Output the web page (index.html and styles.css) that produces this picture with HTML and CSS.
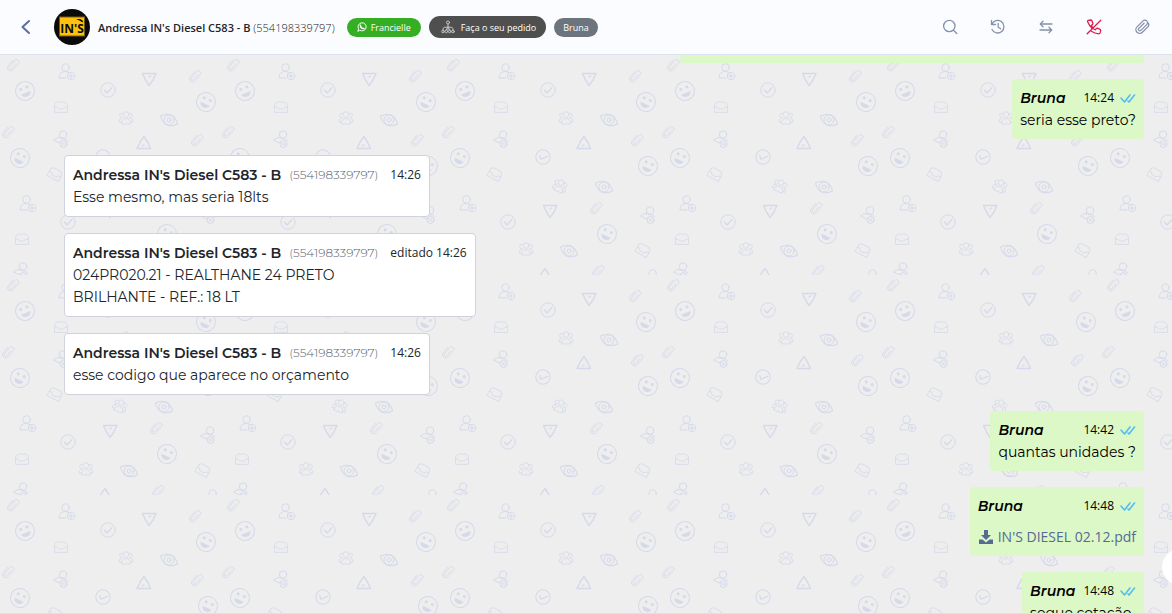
FILE: index.html
```html
<!DOCTYPE html>
<html lang="pt-BR">
  <head>
    <meta charset="UTF-8" />
    <meta name="viewport" content="width=device-width, initial-scale=1.0" />
    <title>Atendimento</title>
    <link rel="stylesheet" href="styles.css" />
  </head>
  <body>
    <header class="chat-header">
      <button class="back-btn" aria-label="Voltar">
        <svg width="16" height="16" viewBox="0 0 16 16"><path d="M11 2 4.500 8 11 14" /></svg>
      </button>
      <svg class="avatar" width="36" height="36" viewBox="0 0 36 36" role="img" aria-label="IN'S">
        <circle cx="18" cy="18" r="18" fill="#0a0a0a" />
        <rect x="5" y="7.500" width="26" height="20" fill="#7a5a10" />
        <rect x="6" y="8.500" width="24" height="18" fill="#fbc10c" />
        <text x="18" y="24" text-anchor="middle">IN'S</text>
        <path d="M22 10.500q6-2 7.500 3l-2.500-1q-1.500-1.500-5-2" fill="#0a0a0a" />
      </svg>
      <h1 class="contact">Andressa IN's Diesel C583 - B <span class="contact-phone">(554198339797)</span></h1>
      <div class="tags">
        <span class="tag tag-green">
          <svg width="10" height="10" viewBox="0 0 16 16">
            <path d="M1.500 14.500 2.500 11A6.500 6.500 0 1 1 5 13.500z" />
            <path d="M5.500 5q0 5 5.500 5.500" stroke-width="2.400" />
          </svg>
          Francielle
        </span>
        <span class="tag tag-dark">
          <svg width="14" height="14" viewBox="0 0 14 14">
            <circle cx="7" cy="2.500" r="1.500" />
            <path d="M7 4v6M2 10V8.500Q2 7 7 7t5 1.500V10M5 10l2-3 2 3" />
            <circle cx="2" cy="11.500" r="1.300" />
            <circle cx="5.300" cy="11.500" r="1.300" />
            <circle cx="8.700" cy="11.500" r="1.300" />
            <circle cx="12" cy="11.500" r="1.300" />
          </svg>
          Faça o seu pedido
        </span>
        <span class="tag tag-gray">Bruna</span>
      </div>
      <nav class="actions">
        <button aria-label="Buscar">
          <svg width="16" height="16" viewBox="0 0 16 16"><circle cx="7.300" cy="7" r="5.700" /><path d="m11.500 11.200 3.300 3.300" /></svg>
        </button>
        <button aria-label="Histórico">
          <svg width="16" height="16" viewBox="0 0 16 16"><path d="M1.500 1.500V5.500h4M1.800 5.300A6.300 6.300 0 1 1 2 10.500M8.200 4.500V8.300l2.500 1.500" /></svg>
        </button>
        <button aria-label="Transferir">
          <svg width="16" height="16" viewBox="0 0 16 16"><path d="M14 5H2.500M5 2.300 2.300 5 5 7.700M2 11h11.500M11 8.300 13.700 11 11 13.700" /></svg>
        </button>
        <button class="end-btn" aria-label="Encerrar">
          <svg width="16" height="16" viewBox="0 0 16 16">
            <path d="M14.800 1.200 1.200 14.800" />
            <path d="M6.300 9.500Q3 6.300 1.500 2.500 1.300 1.500 2.200 1.300L4.800 1q.8 0 1.100.7l1 2.600q.1.700-.4 1.100L5.300 6.500q.7 1.500 2 2.500" />
            <path d="M5.300 12.300q3.500 2.300 7.500 2.500 1 0 1.300-.9l.6-2.500q0-.8-.7-1.100l-2.600-1.100q-.6-.2-1.100.4l-1 1.200-1.500-.8" />
          </svg>
        </button>
        <button aria-label="Anexos">
          <svg width="16" height="16" viewBox="0 0 16 16"><path d="M14.300 7.400 8.400 13.300a3.800 3.800 0 0 1-5.400-5.400L9 1.900a2.600 2.600 0 0 1 3.700 3.700L6.900 11.400a1.400 1.400 0 0 1-2-2L10 4.300M14.300 7.400q1.300-2.200-.7-3.900" /></svg>
        </button>
      </nav>
    </header>

    <main class="chat">
      <svg class="wallpaper" aria-hidden="true">
        <defs>
          <g id="clip"><path transform="rotate(40)" stroke-width=".8" d="M-3.200-1V3.500a3.200 3.200 0 0 0 6.400 0V-4.500a2.400 2.400 0 0 0-4.800 0V3.500a1.500 1.500 0 0 0 3 0V-3M-3.200-1v-2.500" /></g>
          <g id="smile">
            <circle r="9.500" />
            <g class="fill"><circle cx="-3.300" cy="-3" r="1.500" /><circle cx="3.300" cy="-3" r="1.500" /><path d="M-5 2H5Q4 6 0 6t-5-4" /></g>
          </g>
          <g id="plus-user"><circle cx="-1.500" cy="-4.500" r="3.700" /><path d="M-1 6h-7Q-8-.5-1.500-.5L2 .5" /><circle cx="4" cy="4" r="3.700" /><path d="M4 2v4M2 4h4" /></g>
          <g id="x-user"><circle cx="2" cy="-4.500" r="3.700" /><path d="M-1 4Q-4 3-7.500 1-3-3 1-.5q4 0 6 2.500" /><circle cx="2.500" cy="5" r="3.500" /><path d="m1 3.500 3 3m0-3-3 3" /></g>
          <g id="check"><circle r="7.200" /><path d="m-3.500 0 2.500 3 5-5.500" stroke-width="1.200" /></g>
          <g id="arrow"><path d="M-6.500-5.500H7Q4 2 0 6.500-4 1-6.500-5.500zM0-2 1.500-3" stroke-width="1.400" /></g>
          <g id="inbox" opacity=".8"><path d="M-6.500 5V0q0-5 4-5h5q4 0 4 5v5zM-6.500 0h2.500l1.500 2h5L4 0h2.500" /></g>
          <g id="group" stroke-width=".8"><circle cy="-3.500" r="2.800" /><path d="M-4.500 5.500V4Q-4 .5 0 .5T4.500 4v1.500zM-3-4.500a2.200 2.200 0 1 0-.5 4Q-7 0-7 4h2.500M3-4.500a2.200 2.200 0 1 1 .5 4Q7 0 7 4H4.500" /></g>
          <g id="eye"><path transform="rotate(25)" d="M-9.500 0Q-5-5.500 0-5.500T9.500 0Q5 5.500 0 5.500T-9.500 0z" /><circle r="5" /><circle r="2" /></g>
          <pattern id="tile" width="220" height="220" patternUnits="userSpaceOnUse">
            <g class="doodles">
              <use href="#clip" x="13" y="10" />
              <use href="#clip" x="195" y="21" />
              <use href="#clip" x="8" y="77" />
              <use href="#clip" x="197" y="85" />
              <use href="#clip" x="156" y="153" />
              <use href="#clip" x="158" y="216" />
              <use href="#smile" transform="translate(25 36) rotate(-22)" />
              <use href="#smile" transform="translate(206 47) rotate(25)" />
              <use href="#smile" transform="translate(20 103) rotate(25)" />
              <use href="#smile" transform="translate(208 111) rotate(25)" />
              <use href="#smile" transform="translate(167 179) rotate(25)" />
              <use href="#plus-user" x="67" y="17" />
              <use href="#plus-user" x="28" y="149" />
              <use href="#plus-user" x="214" y="223" />
              <use href="#x-user" x="61" y="84" />
              <use href="#x-user" x="208" y="160" />
              <use href="#x-user" x="21" y="216" />
              <use href="#check" x="108" y="35" />
              <use href="#check" transform="translate(103 102) rotate(25)" />
              <use href="#check" x="68" y="167" />
              <use href="#arrow" x="149" y="24" />
              <use href="#arrow" transform="translate(144 88) rotate(180)" />
              <use href="#arrow" x="110" y="156" />
              <use href="#arrow" transform="translate(105 220) rotate(180)" />
              <use href="#inbox" x="61" y="52" />
              <use href="#inbox" transform="translate(55 119) rotate(28)" />
              <use href="#inbox" x="22" y="184" />
              <use href="#inbox" transform="translate(203 195) rotate(28)" />
              <use href="#group" x="126" y="63" />
              <use href="#group" transform="translate(120 131) rotate(22)" />
              <use href="#group" x="86" y="194" />
              <use href="#eye" x="169" y="65" />
              <use href="#eye" x="164" y="132" />
              <use href="#eye" x="129" y="196" />
            </g>
          </pattern>
          <g id="read"><path d="m1 6 3.500 4L10 3M8 9l1 1 5.500-7" /></g>
        </defs>
        <rect width="100%" height="100%" fill="url(#tile)" stroke="none" />
      </svg>

      <div class="messages">
        <div class="msg msg-out msg-cut"></div>

        <article class="msg msg-out">
          <div class="msg-head">
            <em class="sender">Bruna</em>
            <time class="time">14:24</time>
            <svg class="read" width="16" height="12" viewBox="0 0 16 12"><use href="#read" /></svg>
          </div>
          <p>seria esse preto?</p>
        </article>

        <article class="msg msg-in">
          <div class="msg-head">
            <b class="sender">Andressa IN's Diesel C583 - B</b>
            <span class="phone">(554198339797)</span>
            <time class="time">14:26</time>
          </div>
          <p>Esse mesmo, mas seria 18lts</p>
        </article>

        <article class="msg msg-in">
          <div class="msg-head">
            <b class="sender">Andressa IN's Diesel C583 - B</b>
            <span class="phone">(554198339797)</span>
            <span class="time">editado <time>14:26</time></span>
          </div>
          <p>024PR020.21 - REALTHANE 24 PRETO<br />BRILHANTE - REF.: 18 LT</p>
        </article>

        <article class="msg msg-in">
          <div class="msg-head">
            <b class="sender">Andressa IN's Diesel C583 - B</b>
            <span class="phone">(554198339797)</span>
            <time class="time">14:26</time>
          </div>
          <p>esse codigo que aparece no orçamento</p>
        </article>

        <article class="msg msg-out">
          <div class="msg-head">
            <em class="sender">Bruna</em>
            <time class="time">14:42</time>
            <svg class="read" width="16" height="12" viewBox="0 0 16 12"><use href="#read" /></svg>
          </div>
          <p>quantas unidades ?</p>
        </article>

        <article class="msg msg-out">
          <div class="msg-head">
            <em class="sender">Bruna</em>
            <time class="time">14:48</time>
            <svg class="read" width="16" height="12" viewBox="0 0 16 12"><use href="#read" /></svg>
          </div>
          <a class="file" href="#">
            <svg width="16" height="16" viewBox="0 0 16 16"><path d="M6 1h4v5h3L8 11 3 6h3zM1 10.500h3.500L8 13.500l3.500-3H15V15H1z" /></svg>
            IN'S DIESEL 02.12.pdf
          </a>
        </article>

        <article class="msg msg-out">
          <div class="msg-head">
            <em class="sender">Bruna</em>
            <time class="time">14:48</time>
            <svg class="read" width="16" height="12" viewBox="0 0 16 12"><use href="#read" /></svg>
          </div>
          <p>segue cotação</p>
        </article>
      </div>

      <button class="float-btn" aria-label="Abrir painel"></button>
    </main>
  </body>
</html>
```
FILE: styles.css
```css
* {
  margin: 0;
  padding: 0;
  box-sizing: border-box;
}

body {
  height: 100vh;
  display: flex;
  flex-direction: column;
  overflow: hidden;
  font-family: "Segoe UI", "Open Sans", sans-serif;
  color: #212529;
}

button {
  border: 0;
  background: none;
  cursor: pointer;
}

svg {
  flex: none;
  fill: none;
  stroke: currentColor;
  stroke-linecap: round;
  stroke-linejoin: round;
}

/* header */
.chat-header {
  flex: none;
  height: 55px;
  display: flex;
  align-items: center;
  padding: 0 6px 0 18px;
  background: #fbfcff;
  border-bottom: 1px solid #dbe2ec;
}

.back-btn {
  display: flex;
  margin-right: 20px;
  color: #5a6f9c;
  stroke-width: 2;
}

.avatar {
  margin-right: 8px;
  stroke: none;
}

.avatar text {
  fill: #0a0a0a;
  font: bold 12px "Liberation Sans Narrow", "Open Sans", sans-serif;
}

.contact {
  font-size: 11px;
  font-weight: 600;
  white-space: nowrap;
}

.contact-phone {
  font-weight: 300;
}

.tags {
  display: flex;
  align-items: center;
  gap: 8px;
  margin-left: 12px;
}

.tag {
  display: flex;
  align-items: center;
  gap: 4px;
  height: 19px;
  padding: 0 9px;
  border-radius: 12px;
  color: #fff;
  font-size: 9px;
  font-weight: 500;
  white-space: nowrap;
}

.tag-green {
  padding: 0 10px;
  background: #34af23;
  stroke-width: 1.5;
}

.tag-dark {
  height: 22px;
  padding: 0 10px 0 12px;
  gap: 6px;
  background: #4f4f4f;
}

.tag-dark svg {
  color: #c4c4c4;
}

.tag-gray {
  background: #6c757d;
}

.actions {
  display: flex;
  margin-left: auto;
}

.actions button {
  width: 48px;
  height: 48px;
  display: flex;
  align-items: center;
  justify-content: center;
  color: #8492ab;
  stroke-width: 1.3;
}

.actions .end-btn {
  color: #dc1c4b;
}

/* conversation */
.chat {
  flex: 1;
  min-height: 0;
  position: relative;
  overflow: hidden;
  background: #eee;
  border-bottom: 1px solid #dbe2ec;
}

.wallpaper {
  position: absolute;
  width: 100%;
  height: 100%;
}

.doodles {
  stroke: #d5d9e9;
  stroke-width: 1;
}

.fill {
  fill: #d5d9e9;
  stroke: none;
}

.messages {
  position: relative;
  display: flex;
  flex-direction: column;
  gap: 16px;
  padding: 0 28px 0 64px;
}

.msg {
  padding: 8px;
  border-radius: 4px;
  font-family: Montserrat, Inter, sans-serif;
  font-size: 14px;
  line-height: 22px;
}

.msg-in {
  align-self: flex-start;
  background: #fff;
  border: 1px solid #d0d2de;
}

.msg-out {
  align-self: flex-end;
  background: #dcf8c6;
  color: #000;
}

.msg-cut {
  width: 43%;
  height: 8px;
  padding: 0;
  border-radius: 0 0 4px 4px;
}

.msg-head {
  display: flex;
  align-items: center;
}

.sender {
  font-weight: 600;
}

.phone {
  margin: 0 4px 0 8px;
  font-size: 12px;
  font-weight: 300;
  color: #5c646c;
}

.time {
  margin-left: auto;
  padding-left: 8px;
  font-family: "Segoe UI", "Open Sans", sans-serif;
  font-size: 12px;
}

.read {
  margin-left: 6px;
  color: #53bdf0;
  stroke-width: 1.6;
}

.file {
  display: flex;
  align-items: center;
  gap: 4px;
  margin-top: 9px;
  color: #566a93;
  font-family: "Segoe UI", "Open Sans", sans-serif;
  font-size: 14px;
  text-decoration: none;
}

.file svg {
  fill: currentColor;
  stroke: none;
}

.float-btn {
  position: absolute;
  right: -26px;
  bottom: 28px;
  width: 36px;
  height: 36px;
  border-radius: 50%;
  background: #fff;
}
```
